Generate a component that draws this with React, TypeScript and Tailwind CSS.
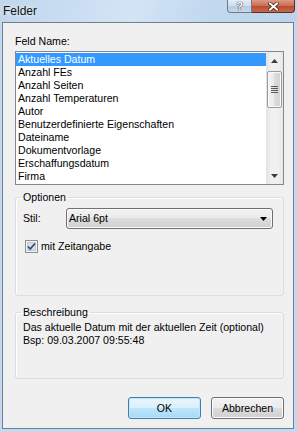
import React from 'react';

const fields = [
  'Aktuelles Datum',
  'Anzahl FEs',
  'Anzahl Seiten',
  'Anzahl Temperaturen',
  'Autor',
  'Benutzerdefinierte Eigenschaften',
  'Dateiname',
  'Dokumentvorlage',
  'Erschaffungsdatum',
  'Firma',
];

const GroupBox: React.FC<{ title: string; className?: string; children: React.ReactNode }> = ({
  title,
  className,
  children,
}) => (
  <fieldset
    className={`border border-[#d5dfe5] rounded-[3px] shadow-[inset_1px_1px_0_#fff] ${className ?? ''}`}
  >
    <legend className="ml-[5px] px-[2px] leading-[13px]">{title}</legend>
    {children}
  </fieldset>
);

const Win7Button: React.FC<{ label: string; primary?: boolean }> = ({ label, primary }) => (
  <button
    className={`w-[73px] h-[22px] rounded-[3px] border leading-[13px] ${
      primary
        ? 'border-[#3c7fb1] bg-[linear-gradient(#eaf6fd,#d9f0fc_50%,#bee6fd_50%,#a7d9f5)] shadow-[inset_0_0_0_1px_#c5e6f9]'
        : 'border-[#707070] bg-[linear-gradient(#f2f2f2,#ebebeb_50%,#dddddd_50%,#cfcfcf)] shadow-[inset_0_0_0_1px_#fcfcfc]'
    }`}
  >
    {label}
  </button>
);

export default function App() {
  return (
    <div className="w-[297px] h-[432px] overflow-hidden bg-[#c3d9ef] text-black font-['Liberation_Sans',Arial,sans-serif]">
      {/* title bar */}
      <div className="h-[22px] flex items-start justify-between bg-[linear-gradient(100deg,#c0d6ec,#d3e4f5_45%,#c2d8ee_70%,#bcd3eb)]">
        <div className="pl-[3px] pt-[4px] text-[12px] leading-[14px] text-[#111] [text-shadow:0_0_6px_#fff]">
          Felder
        </div>
        <div className="flex mr-[2px]">
          <div className="w-[25px] h-[13px] flex items-center justify-center rounded-bl-[4px] border border-t-0 border-[#6a7b8e] bg-[linear-gradient(#e4edf7,#cfdcec_50%,#b8cbe2_50%,#c8d8ea)]">
            <span className="text-[11px] leading-[11px] font-bold text-white [text-shadow:0_0_1px_#223,0_0_1px_#223]">
              ?
            </span>
          </div>
          <div className="w-[43px] h-[13px] flex items-center justify-center rounded-br-[4px] border border-t-0 border-l-0 border-[#5e2b1f] bg-[linear-gradient(#dc9a85,#cb6a50_50%,#b84a30_50%,#c66a50)]">
            <svg width="11" height="9" viewBox="0 0 11 9">
              <path d="M2 1.5 L9 7.5 M9 1.5 L2 7.5" stroke="#3a1a12" strokeWidth="3.4" strokeLinecap="square" />
              <path d="M2 1.5 L9 7.5 M9 1.5 L2 7.5" stroke="#fff" strokeWidth="2" strokeLinecap="square" />
            </svg>
          </div>
        </div>
      </div>

      {/* client area */}
      <div className="ml-[2px] w-[292px] h-[407px] border border-[#6f7f90] bg-[#f0f0f0] pl-[12px] pt-[12px] text-[10.6px] leading-[13px]">
        <div className="w-[269px]">
          <div>Feld Name:</div>

          <div className="mt-[3px] h-[134px] border border-[#828790] bg-white flex">
            <div className="flex-1 pt-[1px]">
              {fields.map((f, i) => (
                <div
                  key={f}
                  className={`h-[13px] pl-[2px] whitespace-nowrap ${
                    i === 0 ? 'bg-[#3399ff] text-white' : ''
                  }`}
                >
                  {f}
                </div>
              ))}
            </div>
            <div className="w-[17px] flex flex-col bg-[linear-gradient(90deg,#e3e3e3,#f0f0f0_30%,#f0f0f0_70%,#e8e8e8)]">
              <div className="h-[17px] flex items-center justify-center">
                <svg width="7" height="4" viewBox="0 0 7 4">
                  <path d="M3.5 0 L7 4 L0 4 Z" fill="#3c3c3c" />
                </svg>
              </div>
              <div className="flex-1">
                <div className="mt-[2px] mx-[1px] h-[37px] rounded-[2px] border border-[#9b9b9b] bg-[linear-gradient(90deg,#f4f4f4,#e9e9e9_50%,#dcdcdc_50%,#d2d2d2)] shadow-[inset_0_0_0_1px_#fafafa] flex items-center justify-center">
                  <svg width="7" height="8" viewBox="0 0 7 8">
                    <path d="M0 0.5 H7 M0 2.5 H7 M0 4.5 H7 M0 6.5 H7" stroke="#5a5a5a" strokeWidth="1" />
                  </svg>
                </div>
              </div>
              <div className="h-[17px] flex items-center justify-center">
                <svg width="7" height="4" viewBox="0 0 7 4">
                  <path d="M0 0 L7 0 L3.5 4 Z" fill="#3c3c3c" />
                </svg>
              </div>
            </div>
          </div>

          <GroupBox title="Optionen" className="mt-[6px] h-[105px]">
            <div className="pl-[7px] pr-[10px] pt-[4px]">
              <div className="flex items-center h-[21px]">
                <div className="w-[43px]">Stil:</div>
                <div className="flex-1 h-[21px] rounded-[3px] border border-[#707070] bg-[linear-gradient(#f2f2f2,#ebebeb_50%,#dddddd_50%,#cfcfcf)] shadow-[inset_0_0_0_1px_#fbfbfb] flex items-center justify-between pl-[2px] pr-[5px]">
                  <span>Arial 6pt</span>
                  <svg width="7" height="4" viewBox="0 0 7 4">
                    <path d="M0 0 L7 0 L3.5 4 Z" fill="#000" />
                  </svg>
                </div>
              </div>
              <div className="mt-[11px] flex items-center h-[13px] pl-[2px]">
                <svg width="13" height="13" viewBox="0 0 13 13">
                  <rect x="0.5" y="0.5" width="12" height="12" fill="#f4f4f4" stroke="#8e8f8f" />
                  <rect x="2.5" y="2.5" width="8" height="8" fill="#dadfe6" stroke="#c3c8cf" />
                  <path d="M3 6.5 L5.2 9 L10 3.5" fill="none" stroke="#2c4a87" strokeWidth="1.8" />
                </svg>
                <span className="ml-[3px]">mit Zeitangabe</span>
              </div>
            </div>
          </GroupBox>

          <GroupBox title="Beschreibung" className="mt-[10px] h-[73px]">
            <div className="pl-[7px] pt-[2px]">
              <div>Das aktuelle Datum mit der aktuellen Zeit (optional)</div>
              <div>Bsp: 09.03.2007 09:55:48</div>
            </div>
          </GroupBox>

          <div className="mt-[18px] flex justify-end gap-[10px]">
            <Win7Button label="OK" primary />
            <Win7Button label="Abbrechen" />
          </div>
        </div>
      </div>
    </div>
  );
}
